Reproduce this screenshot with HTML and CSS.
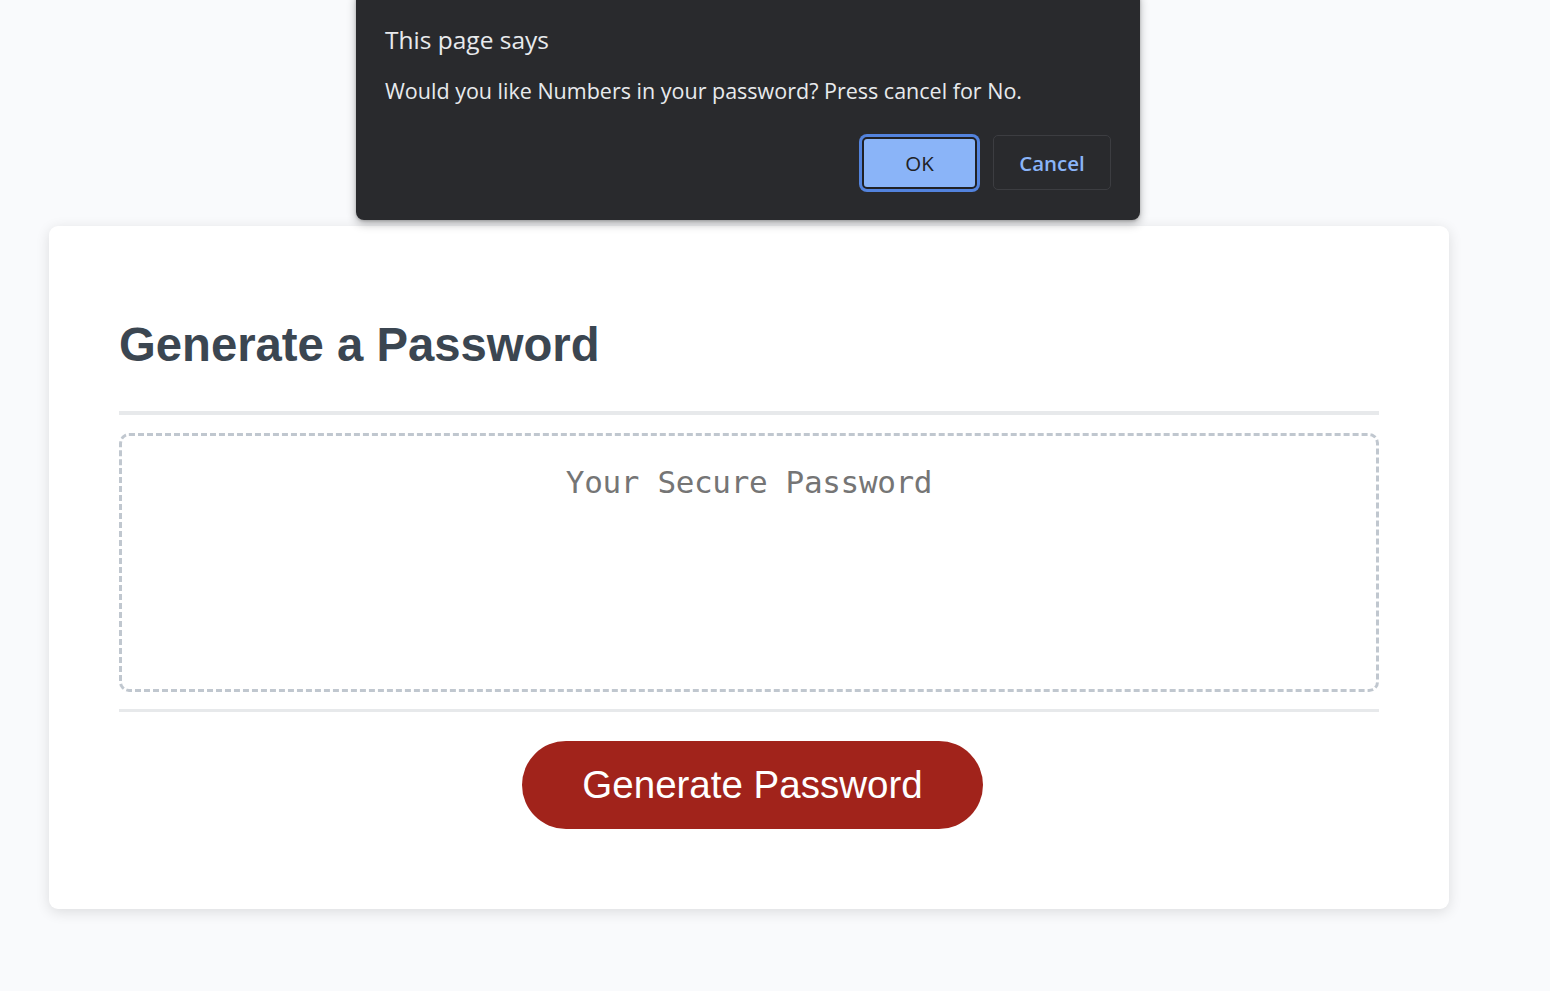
FILE: index.html
```html
<!DOCTYPE html>
<html lang="en">
<head>
<meta charset="utf-8">
<title>Password Generator</title>
<link rel="stylesheet" href="styles.css">
</head>
<body>
  <div class="wrapper">
    <div class="card">
      <div class="card-header">
        <h2>Generate a Password</h2>
      </div>
      <div class="card-body">
        <textarea readonly class="password" placeholder="Your Secure Password" rows="2"></textarea>
      </div>
      <div class="card-footer">
        <button class="btn">Generate Password</button>
      </div>
    </div>
  </div>

  <div class="dialog">
    <div class="dialog-title">This page says</div>
    <div class="dialog-message">Would you like Numbers in your password? Press cancel for No.</div>
    <div class="dialog-actions">
      <button class="dlg-btn dlg-ok">OK</button>
      <button class="dlg-btn dlg-cancel">Cancel</button>
    </div>
  </div>
</body>
</html>
```

FILE: styles.css
```css
html, body {
  margin: 0;
  padding: 0;
}

body {
  font-family: "Liberation Sans", Arial, sans-serif;
  background-color: #f9fafc;
  width: 1550px;
  height: 991px;
  overflow: hidden;
}

.wrapper {
  padding-top: 226px;
  padding-left: 49px;
}

.card {
  box-sizing: border-box;
  width: 1400px;
  background-color: #ffffff;
  border-radius: 9px;
  box-shadow: rgba(0, 0, 0, 0.12) 0 3px 14px 0;
  color: #5f6570;
  padding: 52px 70px 52px;
}

.card-header h2 {
  margin: 0;
  padding-top: 40px;
  padding-bottom: 39px;
  font-size: 47.25px;
  line-height: 54px;
  font-weight: bold;
  color: #3b4651;
}

.card-header::after {
  content: "";
  display: block;
  width: 100%;
  height: 3.5px;
  background: #e7e9eb;
}

.card-body {
  padding: 18px 0 17px;
}

.password {
  display: block;
  box-sizing: border-box;
  width: 100%;
  height: 259px;
  margin: 0;
  padding: 26px 26px 0;
  border: 3px dashed #c0c7cf;
  border-radius: 10px;
  resize: none;
  overflow: hidden;
  outline: none;
  text-align: center;
  font-family: "DejaVu Sans Mono", "Liberation Mono", monospace;
  font-size: 31px;
  letter-spacing: -0.35px;
  line-height: 40px;
  background: #fff;
}

.password::placeholder {
  color: #757575;
}

.card-footer {
  text-align: center;
}

.card-footer::before {
  content: "";
  display: block;
  width: 100%;
  height: 3.5px;
  background: #e7e9eb;
}

.btn {
  display: inline-block;
  box-sizing: border-box;
  height: 88px;
  margin: 29px 28px 28px 35px;
  padding: 0 60px;
  border: none;
  border-radius: 44px;
  background-color: #a1231b;
  color: #ffffff;
  font-family: "Liberation Sans", Arial, sans-serif;
  font-size: 38.5px;
  line-height: 88px;
  cursor: pointer;
}

/* Alert dialog overlay */
.dialog {
  position: absolute;
  left: 356px;
  top: -10px;
  width: 784px;
  box-sizing: border-box;
  padding: 33px 29px 30px;
  background: #292a2d;
  border-radius: 8px;
  box-shadow: 0 4px 10px rgba(0, 0, 0, 0.28), 0 1px 3px rgba(0, 0, 0, 0.2);
  color: #e8eaed;
  font-family: "Open Sans", "Noto Sans", sans-serif;
}

.dialog-title {
  font-size: 24.5px;
  line-height: 34px;
}

.dialog-message {
  margin-top: 19px;
  font-size: 21.5px;
  line-height: 30px;
}

.dialog-actions {
  display: flex;
  justify-content: flex-end;
  align-items: center;
  gap: 16px;
  margin-top: 29px;
}

.dlg-btn {
  font-family: "Open Sans", "Noto Sans", sans-serif;
  font-size: 20.5px;
  border-radius: 5px;
  cursor: pointer;
}

.dlg-ok {
  box-sizing: border-box;
  width: 115px;
  height: 52px;
  background: #8ab4f8;
  color: #202124;
  border: 2px solid #202124;
  box-shadow: 0 0 0 3px #5383dd;
}

.dlg-cancel {
  box-sizing: border-box;
  width: 118px;
  height: 55px;
  background: transparent;
  color: #8ab4f8;
  border: 1px solid #3c3d41;
  font-weight: 600;
}
```
